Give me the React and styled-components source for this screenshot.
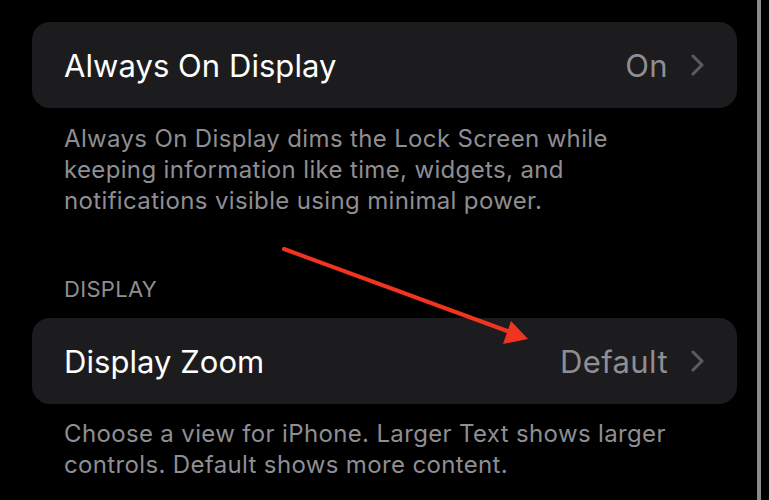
import React from "react"
import styled, { createGlobalStyle } from "styled-components"

const Global = createGlobalStyle`
  html, body { margin: 0; padding: 0; background: #000; }
  body { font-family: Inter, "Noto Sans", sans-serif; -webkit-font-smoothing: antialiased; }
`

const Page = styled.div`
  position: relative;
  width: 769px;
  height: 500px;
  overflow: hidden;
  background: #000;
  padding: 22px 32px 0 32px;
  box-sizing: border-box;
`

const Card = styled.div`
  background: #1c1c1e;
  border-radius: 18px;
  height: 86px;
  display: flex;
  align-items: center;
  justify-content: space-between;
  padding: 0 32px 0 32px;
  box-sizing: border-box;
`

const Label = styled.div`
  color: #fff;
  font-size: 31px;
  letter-spacing: 0.05px;
`

const Value = styled.div`
  display: flex;
  align-items: center;
  gap: 22px;
  color: #8e8e93;
  font-size: 31px;
  letter-spacing: 0.4px;
`

const Footnote = styled.p`
  margin: ${p => p.$top || 15}px 0 0 32px;
  color: #8e8e93;
  font-size: 24px;
  line-height: 31px;
  letter-spacing: 0.35px;
  max-width: ${p => p.$width || 620}px;
`

const Header = styled.div`
  margin: 60px 0 16px 32px;
  color: #8e8e93;
  font-size: 22px;
  line-height: 26px;
  letter-spacing: 0.3px;
`

const Scroll = styled.div`
  position: absolute;
  top: 0;
  bottom: 0;
  left: 757px;
  width: 4px;
  background: #8a8a8a;
`

const Arrow = styled.svg`
  position: absolute;
  left: 0;
  top: 0;
  pointer-events: none;
`

function Chevron() {
  return (
    <svg width="15" height="22" viewBox="0 0 15 22">
      <path d="M3 2 L12 11 L3 20" fill="none" stroke="#5c5c60" strokeWidth="3" strokeLinecap="round" strokeLinejoin="round" />
    </svg>
  )
}

function Row({ label, value }) {
  return (
    <Card>
      <Label>{label}</Label>
      <Value>
        {value}
        <Chevron />
      </Value>
    </Card>
  )
}

export default function App() {
  return (
    <>
      <Global />
      <Page>
        <Row label="Always On Display" value="On" />
        <Footnote $width={565}>
          Always On Display dims the Lock Screen while keeping information like time, widgets, and
          notifications visible using minimal power.
        </Footnote>
        <Header>DISPLAY</Header>
        <Row label="Display Zoom" value="Default" />
        <Footnote $top={14} $width={640}>
          Choose a view for iPhone. Larger Text shows larger controls. Default shows more content.
        </Footnote>
        <Scroll />
        <Arrow width="769" height="500" viewBox="0 0 769 500">
          <line x1="284" y1="249" x2="510" y2="332" stroke="#f0341f" strokeWidth="4" strokeLinecap="round" />
          <polygon points="528,339 511,321 503,344" fill="#f0341f" />
        </Arrow>
      </Page>
    </>
  )
}
